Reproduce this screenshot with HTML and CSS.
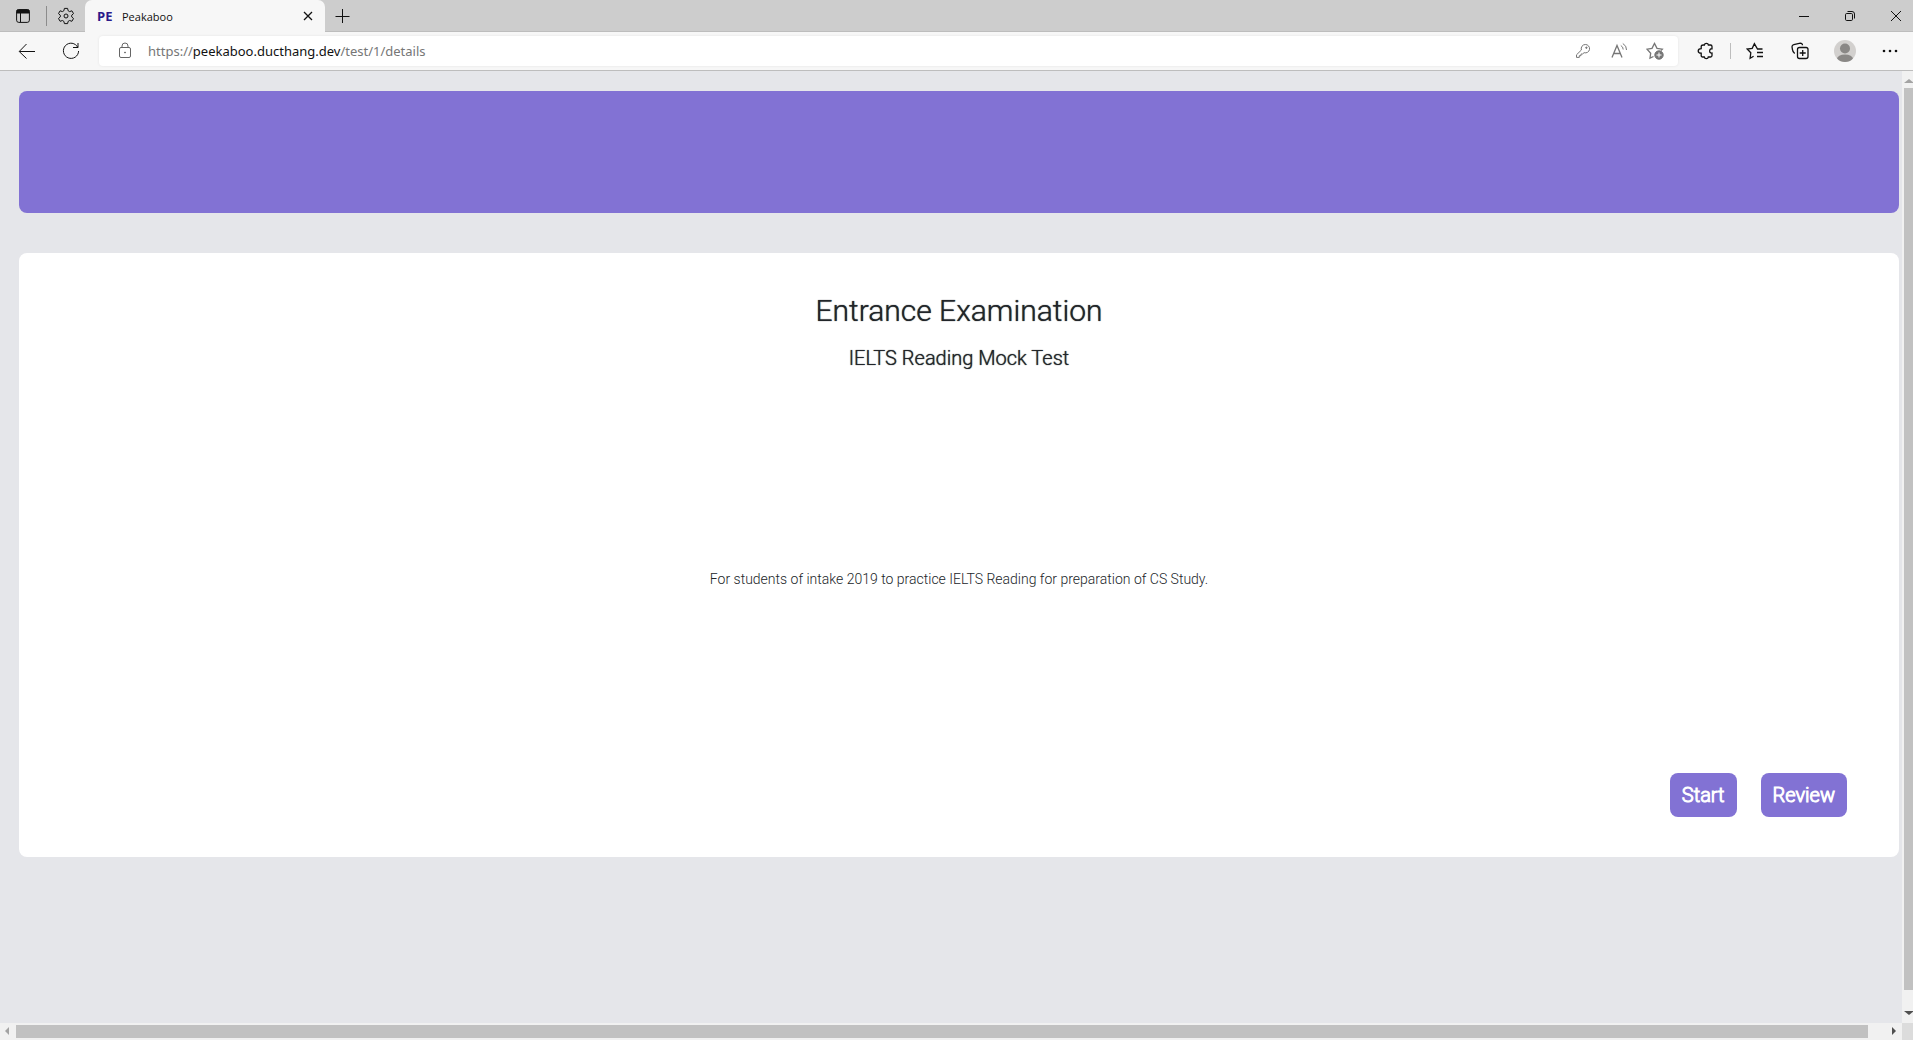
FILE: index.html
```html
<!DOCTYPE html>
<html lang="en">
<head>
<meta charset="utf-8">
<title>Peakaboo</title>
<link rel="stylesheet" href="styles.css">
</head>
<body>
<div class="browser">
  <header class="tabbar">
    <button class="icon-btn tab-actions" aria-label="Tab actions"><svg width="16" height="16" viewBox="0 0 16 16"><rect x="1.600" y="1.600" width="12.800" height="12.800" rx="2.200"/><path d="M2 3.500h12M5.500 4v10" /><path class="solid" d="M2 2h12v3H2z"/></svg></button>
    <span class="bar-sep"></span>
    <button class="icon-btn" aria-label="Settings"><svg width="18" height="18" viewBox="0 0 18 18"><circle cx="9" cy="9" r="2"/><path d="M7.400 1.400h3.200l.5 2.300 1.500.9 2.300-.8 1.600 2.800-1.800 1.600v1.700l1.800 1.600-1.600 2.800-2.300-.8-1.500.9-.5 2.200H7.400l-.5-2.200-1.500-.9-2.300.8-1.600-2.800 1.800-1.600V8.200L1.500 6.600l1.600-2.800 2.300.8 1.500-.9z"/></svg></button>
    <div class="tab">
      <span class="favicon">PE</span>
      <span class="tab-title">Peakaboo</span>
      <button class="tab-close" aria-label="Close tab"><svg width="10" height="10" viewBox="0 0 10 10"><path class="bold" d="M1 1l8 8M9 1L1 9"/></svg></button>
    </div>
    <button class="icon-btn" aria-label="New tab"><svg width="16" height="16" viewBox="0 0 16 16"><path d="M7.500 1v14M.5 8.500h14"/></svg></button>
    <div class="window-controls">
      <button aria-label="Minimize"><svg width="10" height="10" viewBox="0 0 10 10"><path d="M0 5.500h10"/></svg></button>
      <button aria-label="Restore"><svg width="12" height="12" viewBox="0 0 12 12"><rect x="1.500" y="3.500" width="7" height="7" rx="1.200"/><path d="M3.500 1.500h4.500q2.500 0 2.500 2.500v4.500"/></svg></button>
      <button class="window-close" aria-label="Close"><svg width="12" height="12" viewBox="0 0 12 12"><path d="M1 1l10 10M11 1L1 11"/></svg></button>
    </div>
  </header>

  <div class="toolbar">
    <button class="icon-btn" aria-label="Back"><svg width="18" height="18" viewBox="0 0 18 18"><path d="M17 9.500H1.500M8.500 2L1.200 9.500l7.300 7"/></svg></button>
    <button class="icon-btn" aria-label="Refresh"><svg width="18" height="18" viewBox="0 0 18 18"><path d="M15.800 5.400A7.600 7.600 0 1 0 16.600 9M16 1v4.500h-5"/></svg></button>
    <div class="address">
      <svg class="lock" width="16" height="18" viewBox="0 0 16 18"><rect x="2.500" y="5.500" width="11" height="10" rx="1.500"/><path d="M5 5.500V4a3 3 0 0 1 6 0v1.500"/><circle class="solid" cx="8" cy="10.500" r=".5"/></svg>
      <p class="url">https://<span class="host">peekaboo.ducthang.dev</span>/test/1/details</p>
      <button class="icon-btn muted" aria-label="Saved passwords"><svg width="16" height="16" viewBox="0 0 16 16"><path d="M10.300 1.500a4.200 4.200 0 1 1-1.200 8.200L7.500 11H6v1.700H4.300v1.700H1.500v-2.600L6.400 7A4.200 4.200 0 0 1 10.300 1.500z"/><circle class="solid" cx="11.400" cy="4.700" r=".7"/></svg></button>
      <button class="icon-btn muted" aria-label="Read aloud"><svg width="18" height="18" viewBox="0 0 18 18"><path class="bold" d="M2 15.500L7 3.500l5 12M3.800 11.500h6.500"/><path d="M10.800 3.500q2.400 1.300 2.400 4M12.800 1.500q4 2.300 3.700 6.500"/></svg></button>
      <button class="icon-btn muted" aria-label="Add to favorites"><svg width="18" height="18" viewBox="0 0 18 18"><path class="bold" d="M7.500 14.500L4 16.200l.7-5L1 7.200l5-.8L8.500 1.500 11 6.400l5.300.8L15 8.500"/><circle class="solid" cx="13" cy="13" r="4.200"/><path class="white" d="M13 10.500v5M10.500 13h5"/></svg></button>
    </div>
    <div class="actions">
      <button class="icon-btn" aria-label="Extensions"><svg width="18" height="18" viewBox="0 0 18 18"><path class="bold" d="M6.200 3h1.200c.2-2.200 3.800-2.200 4 0h2.100q1.500 0 1.500 1.500v2.300c-3-.6-3.300 4.800 0 4.300v2.400q0 1.500-1.500 1.500h-2.200c-.2 2.200-3.700 2.200-4 0H5.700q-1.500 0-1.500-1.500v-2.300c-4-.3-4-4.300 0-4.500V4.500Q4.200 3 6.200 3z"/></svg></button>
      <span class="bar-sep light"></span>
      <button class="icon-btn" aria-label="Favorites"><svg width="18" height="18" viewBox="0 0 18 18"><path class="bold" d="M16.500 7h-5L8.400 1.700 6.200 6.300 1.200 7l3.600 3.800-.7 5.500 3.500-2M11 10.500h6M11 14.500h6"/></svg></button>
      <button class="icon-btn" aria-label="Collections"><svg width="18" height="18" viewBox="0 0 18 18"><path class="bold" d="M3.700 11.500C1.500 10 1.600 8.500 1.300 6.600L1 4.800Q1 3 2.800 2.600l6.500-1.400q2 0 2.200 2"/><rect class="bold" x="6.500" y="5.500" width="10.500" height="11" rx="2"/><path class="bold" d="M11.700 8v6M8.700 11h6"/></svg></button>
      <button class="icon-btn" aria-label="Profile"><svg width="22" height="22" viewBox="0 0 22 22"><defs><clipPath id="disc"><circle cx="11" cy="11" r="11"/></clipPath></defs><g clip-path="url(#disc)" stroke="none"><rect width="22" height="22" fill="#d2d0ce"/><circle cx="11" cy="8.500" r="5" fill="#8a8886"/><ellipse cx="11" cy="19" rx="8" ry="4.500" fill="#8a8886"/></g></svg></button>
      <button class="icon-btn" aria-label="Settings and more"><svg width="18" height="18" viewBox="0 0 18 18"><g class="solid dots"><circle cx="3" cy="9" r="1.300"/><circle cx="9" cy="9" r="1.300"/><circle cx="15" cy="9" r="1.300"/></g></svg></button>
    </div>
  </div>

  <div class="viewport">
    <main class="page">
      <div class="banner"></div>
      <section class="card">
        <h1>Entrance Examination</h1>
        <h2>IELTS Reading Mock Test</h2>
        <p class="description">For students of intake 2019 to practice IELTS Reading for preparation of CS Study.</p>
        <div class="card-actions">
          <button class="primary">Start</button>
          <button class="primary">Review</button>
        </div>
      </section>
    </main>
    <div class="scroll-y">
      <svg width="11" height="5" viewBox="0 0 11 5"><path class="arrow faint" d="M2 5l5-4 5 4z"/></svg>
      <span class="thumb"></span>
      <svg width="11" height="5" viewBox="0 0 11 5"><path class="arrow" d="M2 0l5 4 5-4z"/></svg>
    </div>
    <div class="scroll-x">
      <svg width="16" height="9" viewBox="0 0 16 9"><path class="arrow faint" d="M9 0v8L5 4z"/></svg>
      <span class="thumb"></span>
      <svg width="34" height="9" viewBox="0 0 34 9"><path class="arrow" d="M24 0v8l4-4z"/></svg>
    </div>
    <span class="scroll-corner"></span>
  </div>
</div>
</body>
</html>
```
FILE: styles.css
```css
* { box-sizing: border-box; }

body {
  margin: 0;
  font-family: Roboto, "Liberation Sans", sans-serif;
  font-weight: 300;
  color: #212529;
}

h1, h2, p { margin: 0; }

button {
  border: 0;
  padding: 0;
  background: none;
  font: inherit;
  color: inherit;
}

svg {
  display: block;
  flex: none;
  fill: none;
  stroke: currentColor;
  stroke-width: 1;
}

svg .bold { stroke-width: 1.3; }
svg .solid { fill: currentColor; }
svg .dots { stroke: none; }
svg .white { stroke: #fff; }
svg .arrow { fill: #505050; stroke: none; }
svg .faint { fill: #a3a3a3; }

.browser {
  display: flex;
  flex-direction: column;
  height: 100vh;
  overflow: hidden;
}

/* Browser chrome */
.tabbar, .toolbar {
  display: flex;
  align-items: center;
  flex: none;
  font-family: "Open Sans", "Noto Sans", sans-serif;
  font-weight: 400;
  color: #111;
}

.tabbar {
  height: 32px;
  padding-left: 5px;
  background: #cdcdcd;
  box-shadow: inset 0 -1px #bdbdbd;
}

.icon-btn {
  display: flex;
  align-items: center;
  justify-content: center;
  flex: none;
  width: 36px;
  height: 30px;
}

.bar-sep {
  flex: none;
  width: 1px;
  height: 20px;
  margin: 0 1px 0 5px;
  background: #8c8c8c;
}

.bar-sep.light {
  height: 16px;
  margin: 0 -3px;
  background: #bdbdbd;
}

.tab {
  display: flex;
  align-items: center;
  align-self: stretch;
  width: 240px;
  margin-left: 1px;
  padding: 0 12px;
  border-radius: 7px 7px 0 0;
  background: #f7f7f7;
  font-size: 11px;
}

.favicon {
  width: 25px;
  font-weight: 700;
  font-size: 13px;
  color: #2b1a8a;
}

.tab-title { flex: 1; }

.window-controls {
  display: flex;
  align-self: stretch;
  margin-left: auto;
}

.window-controls button {
  display: flex;
  align-items: center;
  justify-content: center;
  width: 46px;
}

.window-controls .window-close {
  width: 40px;
  padding-left: 6px;
}

.toolbar {
  height: 39px;
  padding: 0 5px 0 9px;
  gap: 8px;
  border-bottom: 1px solid #bdbdbd;
  background: #f7f7f7;
}

.address {
  display: flex;
  align-items: center;
  flex: 1;
  height: 30px;
  margin-left: 2px;
  padding: 0 5px 0 18px;
  border-radius: 4px;
  background: #fff;
  box-shadow: 0 0 3px rgba(0, 0, 0, 0.08);
}

.lock { color: #666; }

.url {
  flex: 1;
  margin-left: 15px;
  font-family: "Noto Sans", "Open Sans", sans-serif;
  font-size: 13px;
  color: #767676;
}

.host { color: #111; }
.muted { color: #767676; }

.actions {
  display: flex;
  align-items: center;
  gap: 9px;
  margin-left: 2px;
}

/* Page */
.viewport {
  display: grid;
  flex: 1;
  grid-template-columns: 1fr 11px;
  grid-template-rows: 1fr 17px;
  min-height: 0;
}

.page {
  display: flex;
  flex-direction: column;
  gap: 40px;
  padding: 20px 3px 20px 19px;
  overflow: hidden;
  background: #e5e6ea;
}

.banner {
  flex: none;
  height: 122px;
  border-radius: 8px;
  background: #8272d4;
}

.card {
  display: flex;
  flex-direction: column;
  padding: 40px 52px;
  border-radius: 8px;
  background: #fff;
  text-align: center;
}

.card h1, .card h2 {
  font-weight: 300;
  text-shadow: 0 0 1px currentColor;
}

.card h1 {
  font-size: 30px;
  line-height: 36px;
}

.card h2 {
  margin-top: 17px;
  font-size: 20px;
  line-height: 24px;
}

.description {
  padding: 199px 0 184px;
  font-size: 14px;
  line-height: 20px;
}

.card-actions {
  display: flex;
  justify-content: flex-end;
  gap: 24px;
}

.primary {
  padding: 10px 12px;
  border-radius: 8px;
  background: #8272d4;
  -webkit-text-stroke: 1px #fff;
  font-size: 20px;
  line-height: 24px;
  color: #fff;
}

/* Scrollbars */
.scroll-y, .scroll-x {
  display: flex;
  background: #f1f1f1;
}

.scroll-y {
  flex-direction: column;
  gap: 5px;
  padding: 7px 0;
}

.scroll-y .thumb {
  flex: 1;
  margin: 0 0 16px 2px;
}

.scroll-x { align-items: center; }

.scroll-x .thumb {
  flex: 1;
  height: 13px;
}

.thumb { background: #c1c1c1; }
.scroll-corner { background: #dcdcdc; }
```
